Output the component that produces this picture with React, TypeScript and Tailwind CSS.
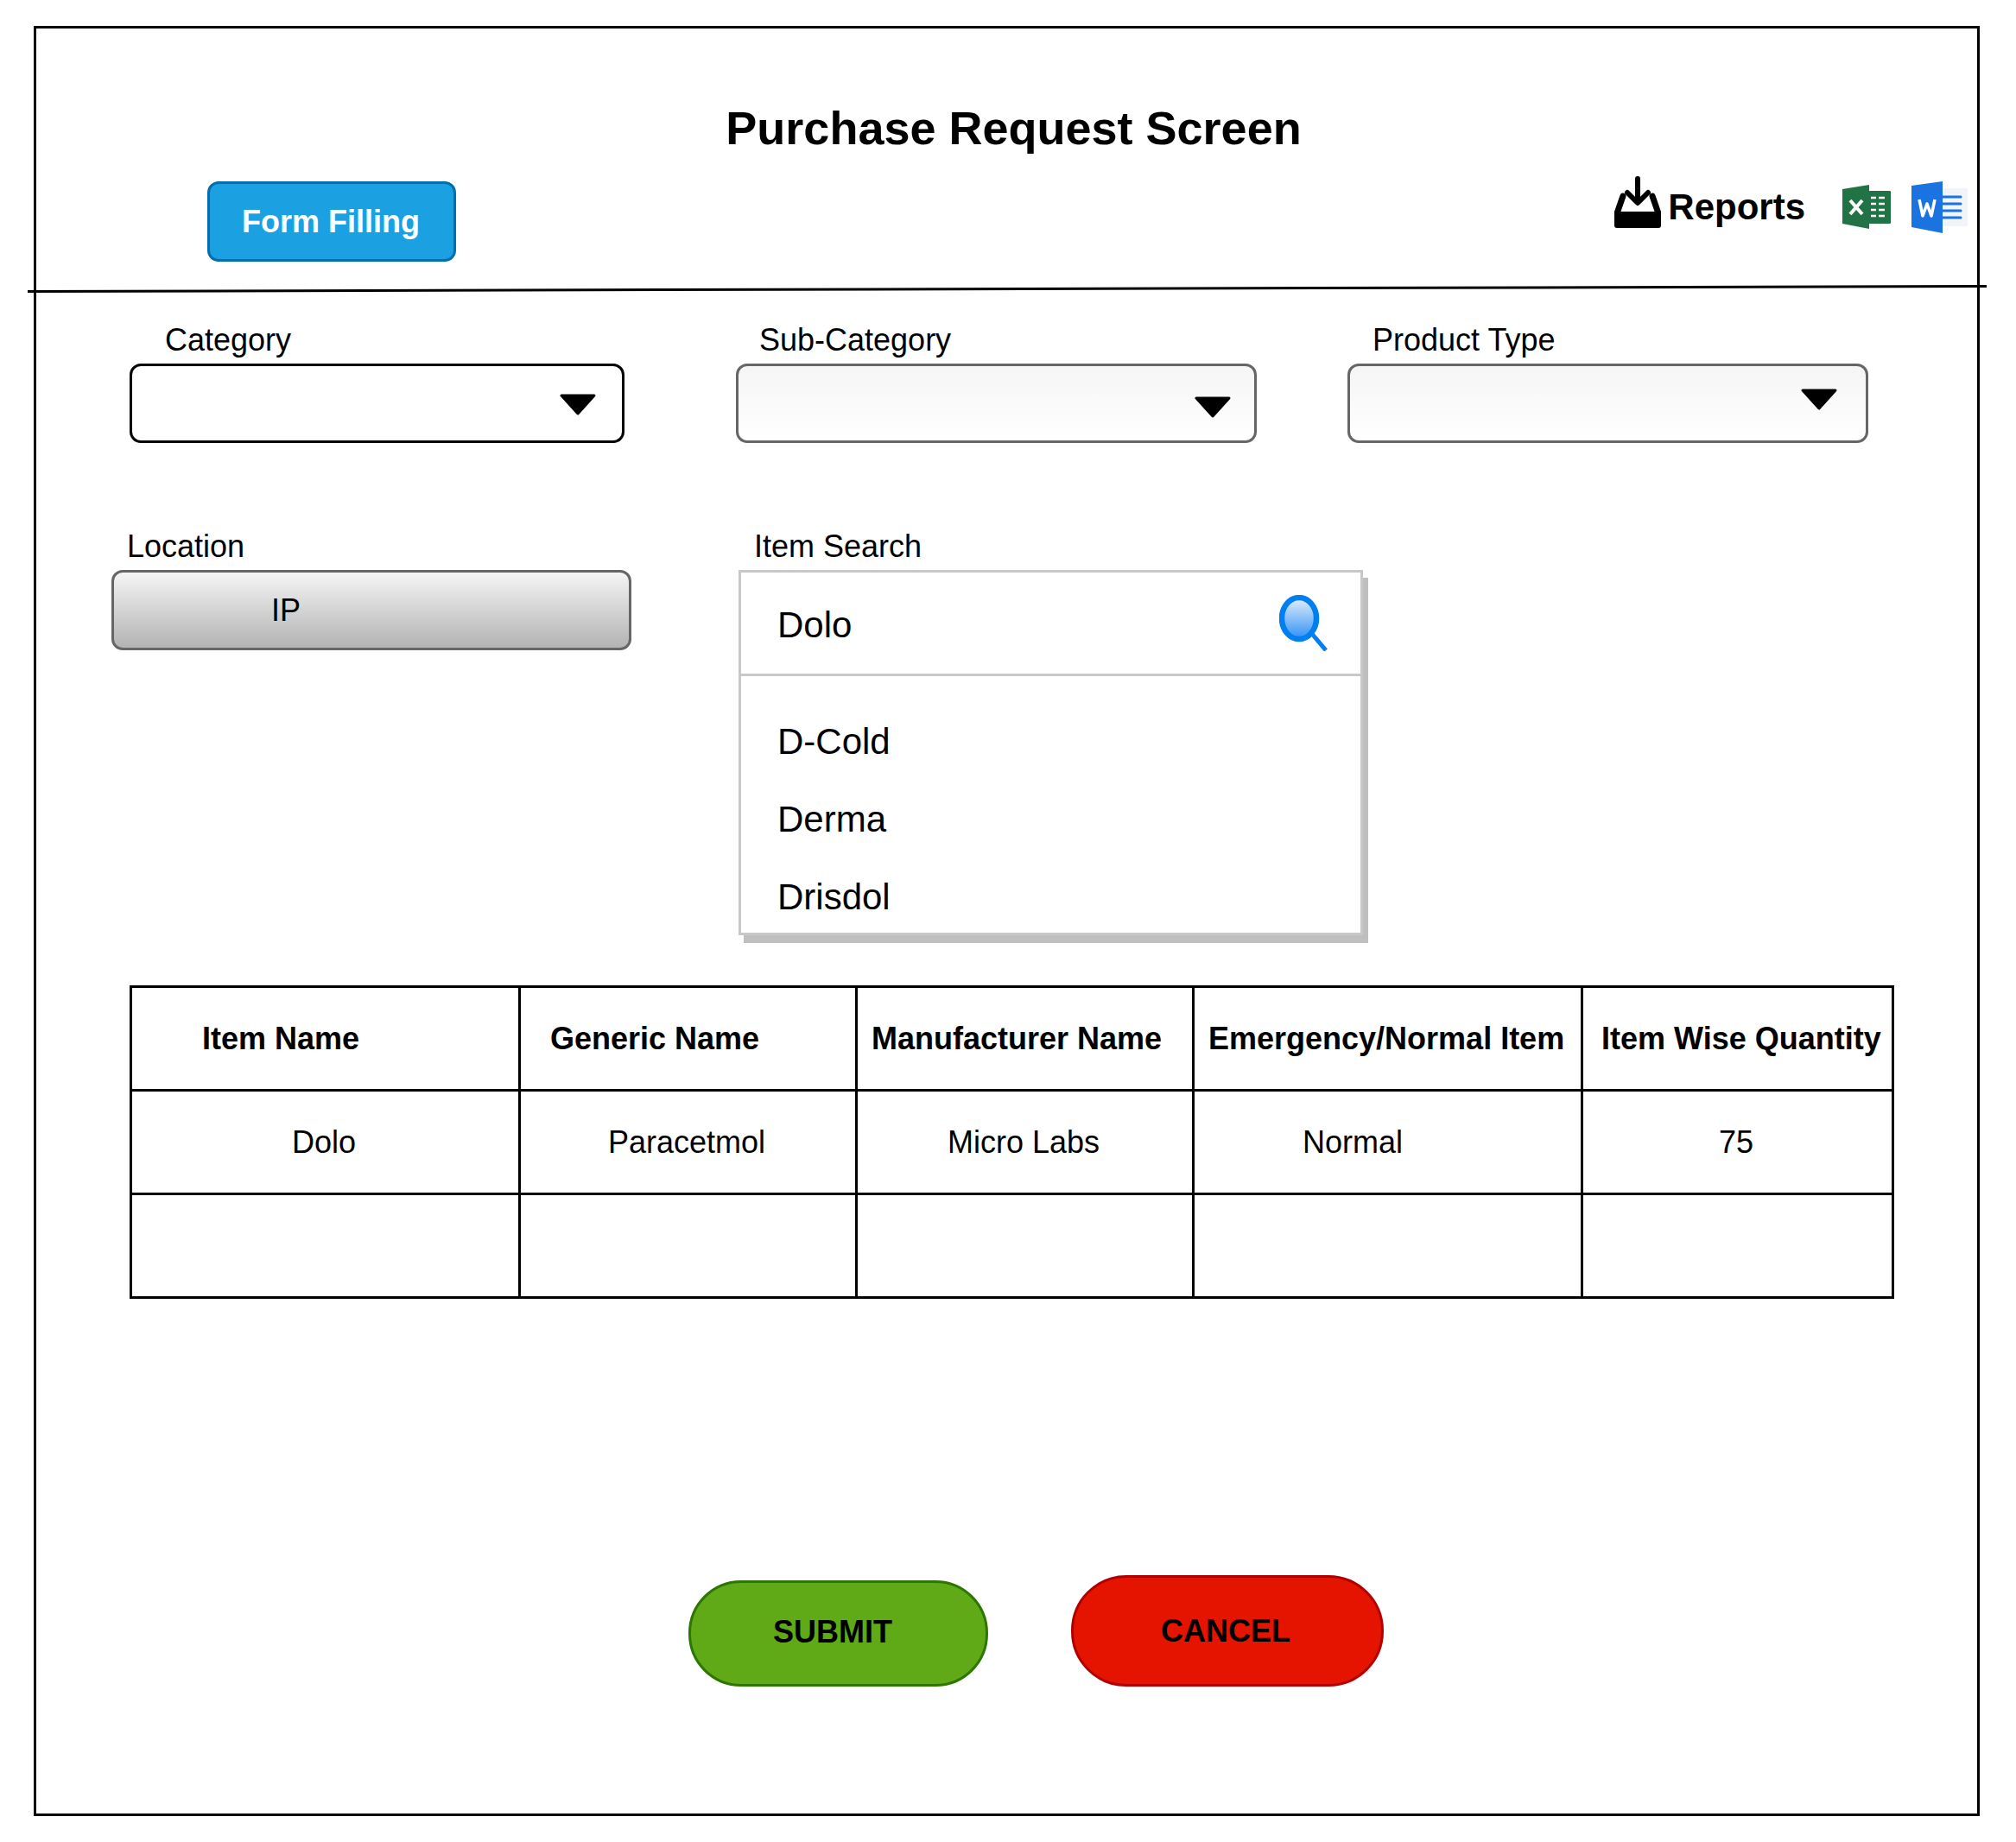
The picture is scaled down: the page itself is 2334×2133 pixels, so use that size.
const sans = "font-['Liberation_Sans',Arial,sans-serif]"

function CaretIcon() {
  return (
    <svg width="42" height="25" viewBox="0 0 42 25" className="shrink-0">
      <polygon points="2,2 40,2 21,23" fill="#000" stroke="#000" strokeWidth="3" strokeLinejoin="round" />
    </svg>
  )
}

function ReportsIcon() {
  return (
    <svg width="54" height="60" viewBox="0 0 54 60">
      <path d="M27 3V28" fill="none" stroke="#000" strokeWidth="6" strokeLinecap="round" />
      <path d="M15 19L27 31L39 19" fill="none" stroke="#000" strokeWidth="6" strokeLinecap="round" strokeLinejoin="round" />
      <path d="M10 23L3 43M44 23L51 43" fill="none" stroke="#000" strokeWidth="7" strokeLinecap="round" />
      <path d="M3 41H51Q54 41 54 44V57Q54 60 51 60H3Q0 60 0 57V44Q0 41 3 41Z" fill="#000" />
    </svg>
  )
}

function ExcelIcon() {
  return (
    <svg width="56" height="51" viewBox="0 0 56 51">
      <rect x="30" y="7" width="26" height="38" rx="1" fill="#217346" />
      <polygon points="0,5 31,0 31,51 0,45" fill="#217346" />
      <path d="M9 18L23 34M23 18L9 34" stroke="#fff" strokeWidth="4" fill="none" />
      <path d="M33 15H39M42 15H49M33 22H39M42 22H49M33 29H39M42 29H49M33 36H39M42 36H49" stroke="#fff" strokeWidth="2.5" fill="none" />
    </svg>
  )
}

function WordIcon() {
  return (
    <svg width="65" height="60" viewBox="0 0 65 60">
      <rect x="36" y="8" width="29" height="44" rx="1" fill="#f1f5fa" />
      <polygon points="0,5 36,0 36,60 0,53" fill="#1a73e0" />
      <path d="M9 21L13 40L18 26L23 40L27 21" stroke="#fff" strokeWidth="3.6" fill="none" strokeLinejoin="round" />
      <path d="M36 18H57M36 26H57M36 34H57M36 42H57" stroke="#1a73e0" strokeWidth="3" fill="none" strokeLinecap="round" />
    </svg>
  )
}

function SearchIcon() {
  return (
    <svg width="56" height="65" viewBox="0 0 56 65">
      <defs>
        <linearGradient id="lens" x1="0" y1="0" x2="0" y2="1">
          <stop offset="0" stopColor="#e4effb" />
          <stop offset="1" stopColor="#2f90f5" />
        </linearGradient>
      </defs>
      <path d="M38 45L54 64" stroke="#007ff0" strokeWidth="5" fill="none" />
      <ellipse cx="23" cy="27" rx="20" ry="24" fill="url(#lens)" stroke="#007ff0" strokeWidth="6.5" />
    </svg>
  )
}

const columns = [
  { head: "Item Name", headClass: "pl-[81px]", value: "Dolo", valueClass: "pl-[185px]", width: "w-[450px]" },
  { head: "Generic Name", headClass: "pl-[34px]", value: "Paracetmol", valueClass: "pl-[101px]", width: "w-[390px]" },
  { head: "Manufacturer Name", headClass: "pl-[16px]", value: "Micro Labs", valueClass: "pl-[104px]", width: "w-[390px]" },
  { head: "Emergency/Normal Item", headClass: "pl-[16px]", value: "Normal", valueClass: "pl-[125px]", width: "w-[450px]" },
  { head: "Item Wise Quantity", headClass: "pl-[21px]", value: "75", valueClass: "pl-[157px]", width: "w-[360px]" },
]

export default function App() {
  return (
    <div className={`min-h-[2133px] bg-white pl-[39px] pt-[30px] text-[36px] text-black ${sans}`}>
      <div className="relative h-[2073px] w-[2253px] border-[3px] border-black">
        {/* the divider in the picture runs slightly uphill */}
        <svg width="2268" height="10" className="absolute -left-[10px] top-[296px]">
          <line x1="0" y1="8.5" x2="2268" y2="2.5" stroke="#000" strokeWidth="3" />
        </svg>

        <h1 className="flex justify-center pl-[16px] pt-[84px] text-[54px] font-bold leading-[62px]">
          Purchase Request Screen
        </h1>

        <div className="mt-[25px] flex h-[121px] items-start justify-between pl-[198px] pr-[11px]">
          <button className="mt-[6px] h-[93px] w-[288px] rounded-[13px] border-[3px] border-[#006eaf] bg-[#1ba1e2] pr-[2px] font-bold leading-none text-white">
            Form Filling
          </button>
          <div className="flex items-start">
            <ReportsIcon />
            <span className="mt-[12px] ml-[8px] text-[42px] font-bold leading-[48px]">Reports</span>
            <div className="ml-[43px] mt-[10px]">
              <ExcelIcon />
            </div>
            <div className="ml-[24px] mt-[6px]">
              <WordIcon />
            </div>
          </div>
        </div>

        <div className="mt-[48px] flex pl-[108px]">
          <div className="w-[573px]">
            <div className="pl-[41px] leading-[42px]">Category</div>
            <div className="mt-[6px] flex h-[92px] justify-end rounded-[13px] border-[3px] border-black bg-white pr-[30px] pt-[32px]">
              <CaretIcon />
            </div>
          </div>
          <div className="ml-[129px] w-[603px]">
            <div className="pl-[27px] leading-[42px]">Sub-Category</div>
            <div className="mt-[6px] flex h-[92px] justify-end rounded-[13px] border-[3px] border-[#666666] bg-gradient-to-b from-[#f5f5f5] to-white pr-[27px] pt-[35px]">
              <CaretIcon />
            </div>
          </div>
          <div className="ml-[105px] w-[603px]">
            <div className="pl-[29px] leading-[42px]">Product Type</div>
            <div className="mt-[6px] flex h-[92px] justify-end rounded-[13px] border-[3px] border-[#666666] bg-gradient-to-b from-[#f5f5f5] to-white pr-[33px] pt-[26px]">
              <CaretIcon />
            </div>
          </div>
        </div>

        <div className="mt-[99px] flex pl-[87px]">
          <div className="w-[602px]">
            <div className="pl-[18px] leading-[42px]">Location</div>
            <div className="mt-[6px] flex h-[93px] items-center rounded-[13px] border-[3px] border-[#666666] bg-gradient-to-b from-[#f5f5f5] to-[#b3b3b3] pl-[182px]">
              IP
            </div>
          </div>
          <div className="ml-[124px] w-[723px]">
            <div className="pl-[18px] leading-[42px]">Item Search</div>
            <div className="mt-[6px] h-[423px] border-[3px] border-[#c8c8c8] bg-white pl-[42px] text-[42px] leading-[48px] shadow-[6px_9px_0_#bfbfbf]">
              <div className="-ml-[42px] flex h-[120px] items-start justify-between border-b-[3px] border-[#c8c8c8] pl-[42px] pr-[38px]">
                <span className="mt-[37px]">Dolo</span>
                <div className="mt-[26px]">
                  <SearchIcon />
                </div>
              </div>
              <div className="mt-[52px] flex flex-col gap-[42px]">
                <div>D-Cold</div>
                <div>Derma</div>
                <div>Drisdol</div>
              </div>
            </div>
          </div>
        </div>

        <div className="mt-[58px] pl-[108px]">
          <table className="w-[2040px] table-fixed border-collapse border-[3px] border-black">
            <colgroup>
              {columns.map((col) => (
                <col key={col.head} className={col.width} />
              ))}
            </colgroup>
            <tbody>
              <tr className="h-[120px]">
                {columns.map((col) => (
                  <td key={col.head} className={`whitespace-nowrap border-[3px] border-black font-bold ${col.headClass}`}>
                    {col.head}
                  </td>
                ))}
              </tr>
              <tr className="h-[120px]">
                {columns.map((col) => (
                  <td key={col.head} className={`whitespace-nowrap border-[3px] border-black ${col.valueClass}`}>
                    {col.value}
                  </td>
                ))}
              </tr>
              <tr className="h-[120px]">
                {columns.map((col) => (
                  <td key={col.head} className="border-[3px] border-black" />
                ))}
              </tr>
            </tbody>
          </table>
        </div>

        <div className="mt-[320px] flex items-end pl-[755px]">
          <button className="h-[123px] w-[347px] rounded-[61px] border-[3px] border-[#2d7600] bg-[#60a917] pb-[4px] pr-[13px] font-bold leading-none">
            SUBMIT
          </button>
          <button className="ml-[96px] h-[129px] w-[362px] rounded-[64px] border-[3px] border-[#b20000] bg-[#e51400] pr-[4px] font-bold leading-none">
            CANCEL
          </button>
        </div>
      </div>
    </div>
  )
}
